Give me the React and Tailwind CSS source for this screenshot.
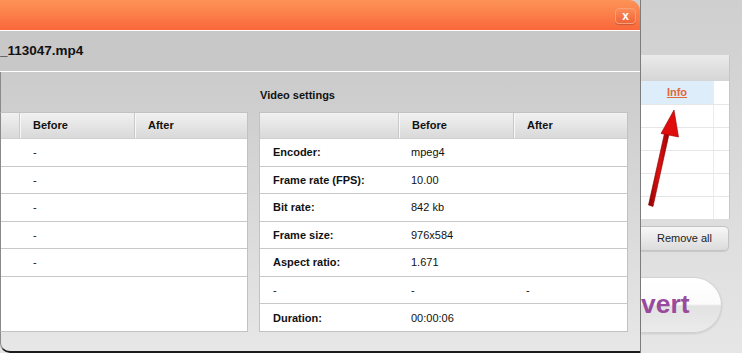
import React from "react";

const font = { fontFamily: '"Liberation Sans", Arial, sans-serif' };

const leftRows = ["-", "-", "-", "-", "-"];

const videoRows = [
  { label: "Encoder:", before: "mpeg4", after: "" },
  { label: "Frame rate (FPS):", before: "10.00", after: "" },
  { label: "Bit rate:", before: "842 kb", after: "" },
  { label: "Frame size:", before: "976x584", after: "" },
  { label: "Aspect ratio:", before: "1.671", after: "" },
  { label: "-", before: "-", after: "-", plain: true },
  { label: "Duration:", before: "00:00:06", after: "" },
];

const HeaderCell = ({ children, className = "" }) => (
  <div
    className={`h-full flex items-center pl-[13px] font-bold text-[11px] text-[#111] border-l border-[#c9c9c9] shadow-[inset_1px_0_0_#f8f8f8] first:border-l-0 first:shadow-none ${className}`}
  >
    {children}
  </div>
);

const LeftTable = () => (
  <div className="w-[248px] h-[220px] flex flex-col bg-white border border-[#c2c2c2] border-l-[#8a8a8a]">
    <div className="h-[26px] grid grid-cols-[18px_115px_1fr] bg-gradient-to-b from-[#f1f1f1] to-[#d9d9d9] border-b border-[#d0d0d0]">
      <HeaderCell />
      <HeaderCell>Before</HeaderCell>
      <HeaderCell>After</HeaderCell>
    </div>
    {leftRows.map((v, i) => (
      <div
        key={i}
        className="h-[27.6px] grid grid-cols-[18px_115px_1fr] items-center border-b border-[#c8c8c8] text-[11px] text-[#111]"
      >
        <div />
        <div className="pl-[14px]">{v}</div>
        <div />
      </div>
    ))}
  </div>
);

const VideoTable = () => (
  <div className="w-[369px] h-[220px] flex flex-col bg-white border border-[#c2c2c2]">
    <div className="h-[26px] grid grid-cols-[138px_115px_1fr] bg-gradient-to-b from-[#f1f1f1] to-[#d9d9d9] border-b border-[#d0d0d0]">
      <HeaderCell />
      <HeaderCell>Before</HeaderCell>
      <HeaderCell>After</HeaderCell>
    </div>
    {videoRows.map((r, i) => (
      <div
        key={i}
        className={`flex-1 grid grid-cols-[138px_115px_1fr] items-center text-[11px] text-[#111] ${
          i < videoRows.length - 1 ? "border-b border-[#c8c8c8]" : ""
        }`}
      >
        <div className={`pl-[13px] ${r.plain ? "" : "font-bold"}`}>{r.label}</div>
        <div className="pl-[13px]">{r.before}</div>
        <div className="pl-[13px]">{r.after}</div>
      </div>
    ))}
  </div>
);

const Arrow = () => (
  <svg
    className="absolute left-0 top-0 pointer-events-none"
    width="742"
    height="353"
    viewBox="0 0 742 353"
  >
    <defs>
      <linearGradient id="arr" x1="0" y1="0" x2="1" y2="0">
        <stop offset="0" stopColor="#8e0000" />
        <stop offset="0.5" stopColor="#e01010" />
        <stop offset="1" stopColor="#9a0000" />
      </linearGradient>
    </defs>
    <path
      d="M648.5 205 L653 206.5 L669.5 132 L665 131 Z"
      fill="url(#arr)"
      stroke="#7d0000"
      strokeWidth="0.6"
    />
    <path d="M674 110 L661 133.5 L678.5 137 Z" fill="#e00d0d" stroke="#900" strokeWidth="0.6" />
  </svg>
);

export default function App() {
  return (
    <div
      className="relative w-[742px] h-[353px] overflow-hidden flex bg-gradient-to-b from-[#cfcfcf] to-[#e6e6e6]"
      style={font}
    >
      {/* dialog */}
      <div className="w-[641px] h-[353px] flex flex-col border-r border-[#7c7c7c] shrink-0">
        <div className="h-[30px] rounded-tr-[11px] bg-gradient-to-b from-[#fd9356] to-[#f9673b] flex items-center justify-end pr-[4px]">
          <div className="w-[21px] h-[16px] mt-[1px] rounded-[4px] bg-gradient-to-b from-[#fb8c55] to-[#f06438] border border-[#f7a07a] shadow-[0_1px_1px_rgba(0,0,0,0.2)] flex items-center justify-center text-white font-bold text-[12px] leading-none">
            x
          </div>
        </div>
        <div className="h-px bg-white" />
        <div className="h-[40px] bg-[#c8c8c8] flex items-center">
          <span className="font-bold text-[13.5px] text-[#111]">_113047.mp4</span>
        </div>
        <div className="h-px bg-white" />
        <div className="flex-1 flex flex-col bg-gradient-to-b from-[#cbcbcb] to-[#e7e7e7] rounded-bl-[10px] border-l border-[#8a8a8a] border-b-2 border-b-[#1c1c1c]">
          <div className="h-[40px] pl-[259px] pt-[18px] font-bold text-[11px] text-[#111] leading-none">
            Video settings
          </div>
          <div className="flex gap-[11px] -ml-px">
            <LeftTable />
            <VideoTable />
          </div>
        </div>
      </div>

      {/* background app */}
      <div className="flex-1 flex flex-col pt-[55px]">
        <div className="w-[89px] flex flex-col bg-white border-r border-[#c6c6c6]">
          <div className="h-[26px] bg-gradient-to-b from-[#ebebeb] to-[#d5d5d5]" />
          <div className="h-[23px] flex">
            <div className="w-[72px] bg-[#ddedf9] flex items-center justify-center">
              <span className="font-bold text-[11px] text-[#e2673b] underline">Info</span>
            </div>
            <div className="flex-1 border-l border-[#ececec]" />
          </div>
          {[0, 1, 2, 3, 4].map((i) => (
            <div key={i} className="h-[23px] flex border-t border-[#e6e6e6]">
              <div className="w-[72px]" />
              <div className="flex-1 border-l border-[#ececec]" />
            </div>
          ))}
        </div>
        <div className="mt-[7px] w-[88px] h-[25px] rounded-r-[5px] border border-l-0 border-[#c3c3c3] bg-gradient-to-b from-[#f7f7f7] to-[#dcdcdc] flex items-center justify-center text-[11px] text-[#222] shadow-[0_1px_1px_rgba(0,0,0,0.1)]">
          Remove all
        </div>
        <div className="mt-[26px] w-[81px] h-[56px] rounded-r-[28px] bg-[linear-gradient(to_bottom,#ffffff_0%,#fbfbfb_48%,#e2e2e2_52%,#ebebeb_100%)] border border-l-0 border-[#d2d2d2] shadow-[0_1px_2px_rgba(0,0,0,0.12)] flex items-center">
          <span className="font-bold text-[26.5px] text-[#9a4a9c] leading-none -mt-[2px]">vert</span>
        </div>
      </div>

      <Arrow />
    </div>
  );
}
